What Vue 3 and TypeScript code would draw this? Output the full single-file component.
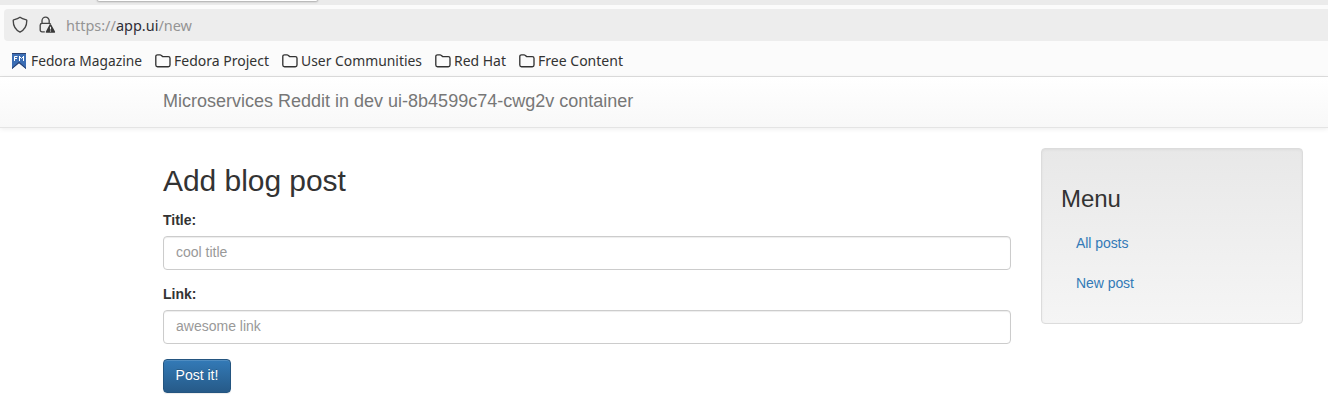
<script setup lang="ts">
interface Bookmark {
  label: string
  width: number
}

const folders: Bookmark[] = [
  { label: 'Fedora Project', width: 95 },
  { label: 'User Communities', width: 121 },
  { label: 'Red Hat', width: 52 },
  { label: 'Free Content', width: 85 },
]

const fields = [
  { id: 'title', label: 'Title:', placeholder: 'cool title' },
  { id: 'link', label: 'Link:', placeholder: 'awesome link' },
]

const links = ['All posts', 'New post']
</script>

<template>
  <div class="window">
    <div class="tabs"><div class="tab"></div></div>
    <div class="toolbar">
      <div class="address">
        <svg class="shield" width="16" height="18" viewBox="0 0 16 18" fill="none">
          <path d="M8 1.2 C6.2 2.7 3.8 3.3 1.6 3.8 Q1.2 3.9 1.2 4.5 C1.2 9.6 2.9 13.6 8 16.1 C13.1 13.6 14.8 9.6 14.8 4.5 Q14.8 3.9 14.4 3.8 C12.2 3.3 9.8 2.7 8 1.2 Z" stroke="#444" stroke-width="1.35" stroke-linejoin="round" />
        </svg>
        <svg class="lock" width="17" height="18" viewBox="0 0 17 18" fill="none">
          <path d="M3 7.4 V4.7 a3.6 3.6 0 0 1 7.2 0 V7.4 M5.8 15.8 H3 a1.8 1.8 0 0 1 -1.8 -1.8 V9.2 a1.8 1.8 0 0 1 1.8 -1.8 H10 a1.7 1.7 0 0 1 1.6 1" stroke="#444" stroke-width="1.35" />
          <path d="M11.4 8.2 Q12 8.2 12.3 8.8 L16 15.5 Q16.5 16.8 15.3 16.8 H7.5 Q6.3 16.8 6.9 15.5 L10.5 8.8 Q10.8 8.2 11.4 8.2 Z" fill="#383838" />
          <path d="M11.5 10.8 V13.4 M11.5 14.4 V15.6" stroke="#eee" stroke-width="1.1" />
        </svg>
        <svg class="url" width="130" height="32">
          <text x="0" y="22" textLength="126" lengthAdjust="spacingAndGlyphs">https://<tspan class="host">app.ui</tspan>/new</text>
        </svg>
      </div>
    </div>
    <div class="bookmarks">
      <div class="bookmark">
        <svg class="fm" width="14" height="16" viewBox="0 0 14 16">
          <path d="M0 0 H14 V16 L7 10 L0 16 Z" fill="#3c6eb4" />
          <path d="M0 0 H14 V1 H0 Z M0 14.7 L7 8.8 L14 14.7 V16 L7 10.2 L0 16 Z" fill="#294172" />
          <path d="M2.5 8 V3.5 H5.5 M2.5 5.5 H5 M7.5 8 V3 M7.5 3.5 L9.5 5.5 L11.5 3.5 M11.5 3 V8" fill="none" stroke="#fff" stroke-width="1" />
        </svg>
        <svg class="label" width="112" height="24"><text x="0" y="17" textLength="111" lengthAdjust="spacingAndGlyphs">Fedora Magazine</text></svg>
      </div>
      <div v-for="folder in folders" :key="folder.label" class="bookmark">
        <svg class="folder" width="16" height="14" viewBox="0 0 16 14" fill="none">
          <path d="M.8 2.5 a1.7 1.7 0 0 1 1.7 -1.7 H5.1 q.6 0 1 .4 L7.6 2.6 H13.3 a1.7 1.7 0 0 1 1.7 1.7 V11 a1.7 1.7 0 0 1 -1.7 1.7 H2.5 A1.7 1.7 0 0 1 .8 11 Z" stroke="#333" stroke-width="1.35" />
        </svg>
        <svg class="label" :width="folder.width + 1" height="24"><text x="0" y="17" :textLength="folder.width" lengthAdjust="spacingAndGlyphs">{{ folder.label }}</text></svg>
      </div>
    </div>
    <header class="navbar">
      <span class="brand">Microservices Reddit in dev ui-8b4599c74-cwg2v container</span>
    </header>
    <main class="content">
      <form class="form" @submit.prevent>
        <h2>Add blog post</h2>
        <div v-for="field in fields" :key="field.id" class="group">
          <label :for="field.id">{{ field.label }}</label>
          <input :id="field.id" type="text" :placeholder="field.placeholder" />
        </div>
        <button type="submit">Post it!</button>
      </form>
      <aside class="menu">
        <h3>Menu</h3>
        <nav><a v-for="link in links" :key="link" href="#">{{ link }}</a></nav>
      </aside>
    </main>
  </div>
</template>

<style>
body { margin: 0; background: #fff; }
</style>

<style scoped>
* { box-sizing: border-box; }
.window {
  height: 406px;
  overflow: hidden;
  font: 14px/20px "Liberation Sans", Arial, sans-serif;
  color: #333;
}
.tabs { height: 5px; padding-left: 98px; background: #ebebeb; }
.tab {
  width: 219px;
  height: 1px;
  background: #fff;
  border-radius: 0 0 4px 4px;
  box-shadow: 0 0 2px 1px #aaa;
}
.toolbar { height: 37px; padding: 4px 0 0 4px; background: #fbfbfb; }
.address {
  display: flex;
  align-items: center;
  height: 32px;
  padding-left: 8px;
  border-radius: 4px 0 0 4px;
  background: #ededed;
}
.lock { margin-left: 11px; }
.url { margin-left: 10px; }
.url, .label { overflow: visible; }
.url text, .label text { font-family: "Noto Sans", sans-serif; font-size: 15.2px; }
.url text { fill: #949494; }
.url .host { fill: #2e2e36; }
.bookmarks {
  display: flex;
  align-items: flex-start;
  height: 35px;
  padding: 7px 0 0 12px;
  border-bottom: 1px solid #dedede;
  background: #fbfbfb;
}
.bookmark { display: flex; align-items: center; height: 24px; margin-right: 12px; }
.label { margin-left: 3px; }
.fm { margin-right: 2px; }
.label text { fill: #333; }
.navbar {
  height: 51px;
  padding: 14px 0 0 163px;
  border-bottom: 1px solid #e4e4e4;
  background: linear-gradient(#fff, #f8f8f8);
  box-shadow: 0 1px 5px rgba(0, 0, 0, .075);
}
.brand { font-size: 18px; line-height: 20px; color: #777; }
.content { display: flex; gap: 30px; align-items: flex-start; padding: 20px 0 0 163px; }
.form { width: 848px; }
h2, h3 { font-weight: 400; line-height: 1.1; }
h2 { margin: 16px 0 13px; font-size: 30px; letter-spacing: -.05px; }
h3 { margin: 18px 0 12px; font-size: 24px; letter-spacing: -.1px; }
.group { margin-bottom: 15px; }
.group + .group { margin-top: -1px; }
label { display: block; height: 20px; margin-bottom: 6px; font-weight: 700; }
input {
  display: block;
  width: 100%;
  height: 34px;
  padding: 5px 12px 7px;
  border: 1px solid #ccc;
  border-radius: 4px;
  background: #fff;
  box-shadow: inset 0 1px 1px rgba(0, 0, 0, .075);
  font: inherit;
}
input::placeholder { color: #999; opacity: 1; }
button {
  display: block;
  width: 68px;
  height: 34px;
  padding: 5px 0 7px;
  border: 1px solid #245580;
  border-radius: 4px;
  background: linear-gradient(#337ab7, #265a88);
  box-shadow: inset 0 1px 0 rgba(255, 255, 255, .15), 0 1px 1px rgba(0, 0, 0, .075);
  color: #fff;
  font: inherit;
  text-shadow: 0 -1px 0 rgba(0, 0, 0, .2);
}
.menu {
  width: 262px;
  height: 176px;
  padding: 19px;
  border: 1px solid #dcdcdc;
  border-radius: 4px;
  background: linear-gradient(#e8e8e8, #f5f5f5);
  box-shadow: inset 0 1px 3px rgba(0, 0, 0, .05), 0 1px 0 rgba(255, 255, 255, .1);
}
nav a { display: block; padding: 9px 15px 11px; color: #337ab7; text-decoration: none; letter-spacing: -.06px; }
</style>
